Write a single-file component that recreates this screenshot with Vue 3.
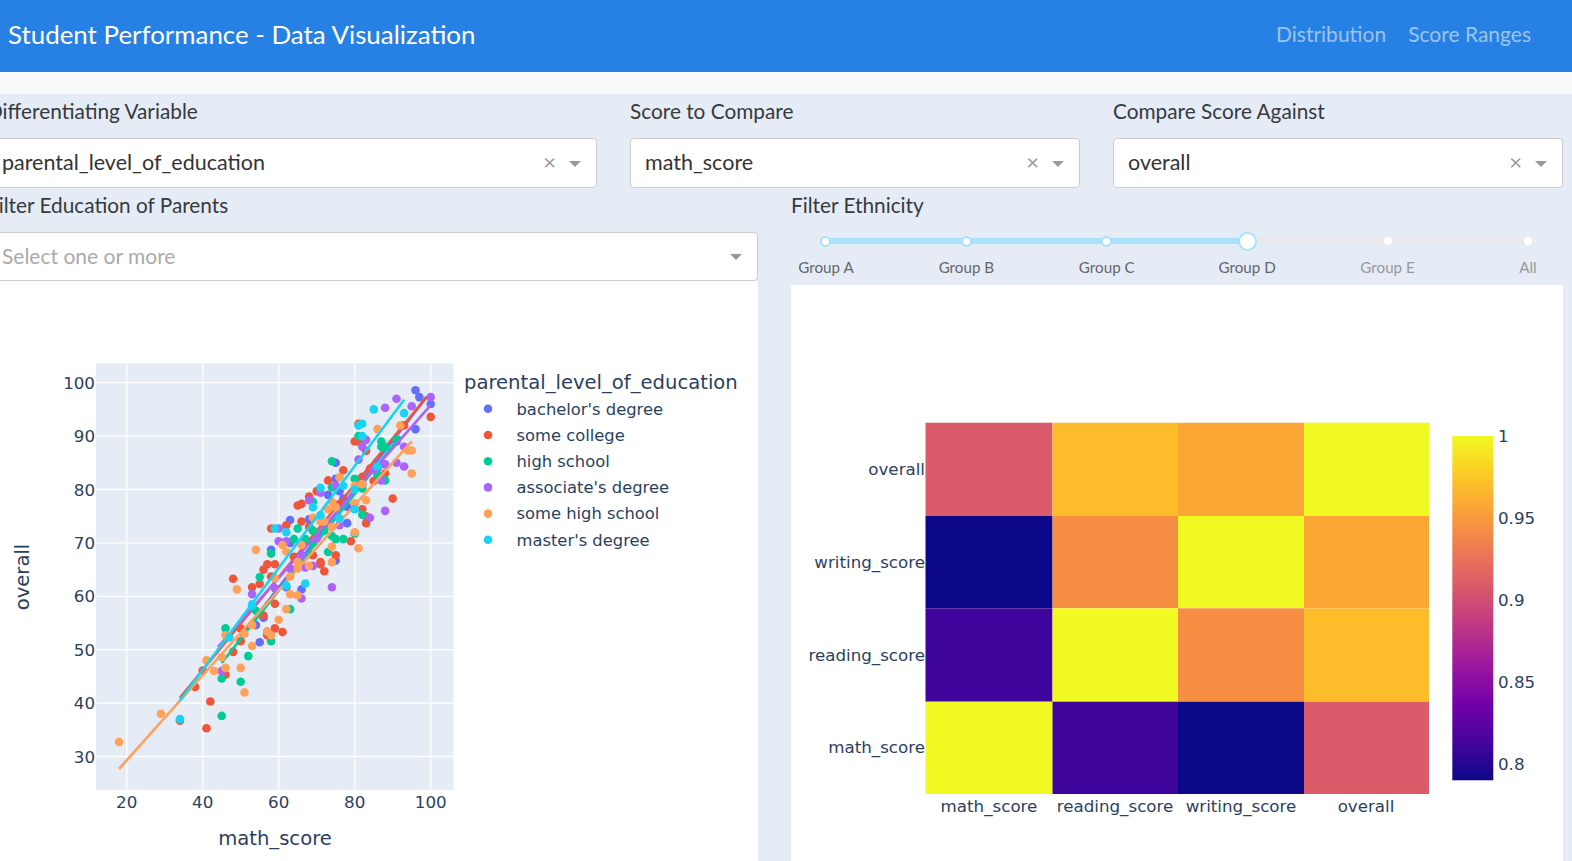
<script setup>
// Chart data read off the dashboard
const groups = [
  { name: "bachelor's degree", color: '#636efa', line: [[50, 52.5], [99, 97.4]], pts: [[96,98.6],[97,97.3],[100,96],[96,91.3],[75,85],[75,82],[76,79.7],[73,79],[77,78.3],[78,76.8],[78,73.7],[63,74.3],[68,74.4],[58,68.7],[75,66.7],[62,61.7],[66,61.3],[54,54.6],[56,56],[55,51.4],[63,70],[70,71],[82,81],[91,89],[86,84]] },
  { name: 'some college', color: '#ef553b', line: [[34, 41], [99, 97.4]], pts: [[100,93.6],[81,92.3],[80,89],[81,89],[83,87.2],[77,83.6],[73,81.7],[84,83.9],[82,82.4],[85,81.6],[88,83],[90,78.3],[68,78.7],[70,79.7],[65,77],[66,77.3],[66,74],[62,73.3],[58,72.7],[68,73],[76,77.3],[82,76.3],[83,75],[83,73.7],[79,70.3],[56,65],[57,66],[59,66],[58,63.7],[53,61.7],[55,62.3],[48,63.3],[71,66.4],[71,66],[72,64.7],[75,67.7],[69,67.7],[64,67.4],[59,58.6],[56,56.4],[59,54],[61,53.3],[57,52.7],[50,51.6],[48,49.6],[46,45.3],[40,46.1],[38,43],[42,40.3],[34,36.7],[41,35.3],[50,54],[93,92]] },
  { name: 'high school', color: '#00cc96', line: [[45, 47.5], [92, 90]], pts: [[74,85.3],[81,90],[87,89],[87,88],[88,88],[91,89.3],[80,82],[82,80.2],[74,80.4],[88,81.7],[86,82.7],[82,75.3],[65,72.7],[69,72.3],[69,77.7],[64,70.7],[67,70.7],[74,71.3],[75,70.7],[77,70.7],[80,71.7],[73,68.3],[58,68],[55,63.6],[69,70],[72,72.3],[63,57.6],[54,57.3],[46,54],[58,51.6],[52,48.8],[45,44.6],[50,44],[45,37.6]] },
  { name: "associate's degree", color: '#ab63fa', line: [[44, 50.5], [100, 95.8]], pts: [[100,97.3],[91,97],[88,95.3],[95,95.6],[83,89.3],[82,88],[81,85.6],[93,88],[88,84.7],[91,85],[93,84.3],[87,81.7],[85,83.7],[71,79.4],[75,80.7],[68,78],[88,76],[84,74.7],[76,73.3],[60,72.7],[60,70.3],[62,70.3],[53,60.4],[67,65.4],[69,65.7],[66,67.7],[74,61.7],[66,59.6],[70,70.8],[63,65.2],[59,61.5],[57,53.4],[45,46]] },
  { name: 'some high school', color: '#ffa15a', line: [[18, 27.7], [95, 89]], pts: [[86,91.3],[92,92],[94,87.3],[95,87.3],[95,83],[76,82.3],[82,81],[80,80.7],[83,78],[80,77.4],[73,76.3],[75,76.7],[74,77.7],[69,74.7],[71,74],[72,74],[74,73],[80,72],[81,69],[74,69.3],[74,66.4],[61,69.6],[54,68.7],[62,68.4],[66,69.6],[65,66.4],[65,65.2],[68,65.7],[63,63.7],[59,63.4],[49,61.3],[63,60.4],[65,60.2],[62,57.6],[60,55.6],[53,54.6],[51,53],[46,52.7],[57,53.4],[58,52.7],[53,50.7],[45,48.6],[41,48],[43,46],[46,46.6],[50,46.6],[51,42],[29,38],[18,32.7]] },
  { name: "master's degree", color: '#19d3f3', line: [[34, 40.5], [93, 96.8]], pts: [[85,95],[93,94.3],[81,92],[82,92.3],[82,90],[86,84.3],[77,80.7],[71,80.3],[80,80],[69,76.7],[71,75.2],[76,74.6],[80,76.3],[59,72.7],[62,72],[62,62],[67,62.4],[53,58.2],[53,58.5],[47,52.3],[34,37]] }
]

const sx = (v) => 126.7 + (v - 20) * 3.8
const sy = (v) => 382.7 + (100 - v) * 5.34

const xTicks = [20, 40, 60, 80, 100]
const yTicks = [100, 90, 80, 70, 60, 50, 40, 30]

const heatCols = [
  { name: 'math_score', x: 925.5, w: 127, mid: 989 },
  { name: 'reading_score', x: 1052.5, w: 125.5, mid: 1115 },
  { name: 'writing_score', x: 1178, w: 126, mid: 1241 },
  { name: 'overall', x: 1304, w: 125, mid: 1366 }
]
const heatRows = [
  { name: 'overall', y: 422.7, h: 93.3, cells: ['#dc5b6b', '#fdbd2a', '#fca636', '#f0f921'] },
  { name: 'writing_score', y: 516, h: 92.3, cells: ['#0d0887', '#f68f44', '#f0f921', '#fca636'] },
  { name: 'reading_score', y: 608.3, h: 93.4, cells: ['#3f049c', '#f0f921', '#f68f44', '#fdbd2a'] },
  { name: 'math_score', y: 701.7, h: 92.3, cells: ['#f0f921', '#3f049c', '#0d0887', '#dc5b6b'] }
]
const plasma = ['#0d0887', '#46039f', '#7201a8', '#9c179e', '#bd3786', '#d8576b', '#ed7953', '#fb9f3a', '#fdca26', '#f0f921']
const barTicks = [['1', 436], ['0.95', 518], ['0.9', 600], ['0.85', 682], ['0.8', 764]]

const marks = ['Group A', 'Group B', 'Group C', 'Group D', 'Group E', 'All']
const activeMark = 3

const topFilters = [
  { label: 'Differentiating Variable', value: 'parental_level_of_education' },
  { label: 'Score to Compare', value: 'math_score' },
  { label: 'Compare Score Against', value: 'overall' }
]
</script>

<template>
  <div class="page">
    <header class="navbar">
      <span class="brand">Student Performance - Data Visualization</span>
      <nav class="links">
        <a>Distribution</a>
        <a>Score Ranges</a>
      </nav>
    </header>
    <div class="strip"></div>

    <main class="content">
      <section class="row-top">
        <div v-for="f in topFilters" :key="f.label" class="field">
          <label class="field-label">{{ f.label }}</label>
          <div class="select">
            <span class="select-value">{{ f.value }}</span>
            <span class="select-clear">×</span>
            <span class="select-arrow"></span>
          </div>
        </div>
      </section>

      <section class="row-bottom">
        <div class="col">
          <label class="field-label">Filter Education of Parents</label>
          <div class="select select-short">
            <span class="select-value placeholder">Select one or more</span>
            <span class="select-arrow"></span>
          </div>
          <div class="panel panel-left">
            <svg class="chart" width="758" height="580" viewBox="0 281 758 580">
              <rect x="96" y="363.3" width="357.3" height="426.7" fill="#e5ecf6" />
              <g stroke="#fff" stroke-width="1.3">
                <line v-for="t in xTicks" :key="t" :x1="sx(t)" :x2="sx(t)" y1="363.3" y2="790" />
                <line v-for="t in yTicks" :key="t" x1="96" x2="453.3" :y1="sy(t)" :y2="sy(t)" />
              </g>
              <g v-for="g in groups" :key="g.name">
                <circle v-for="(p, i) in g.pts" :key="i" :cx="sx(p[0])" :cy="sy(p[1])" r="4.3" :fill="g.color" />
                <line :x1="sx(g.line[0][0])" :y1="sy(g.line[0][1])" :x2="sx(g.line[1][0])" :y2="sy(g.line[1][1])" :stroke="g.color" stroke-width="2.6" />
              </g>
              <g class="tick">
                <text v-for="t in xTicks" :key="t" :x="sx(t)" y="808" text-anchor="middle">{{ t }}</text>
                <text v-for="t in yTicks" :key="t" x="95" :y="sy(t) + 6" text-anchor="end">{{ t }}</text>
              </g>
              <text class="axis-title" x="275" y="845" text-anchor="middle">math_score</text>
              <text class="axis-title" transform="translate(29 577) rotate(-90)" text-anchor="middle">overall</text>
              <text class="axis-title" x="464" y="389">parental_level_of_education</text>
              <g v-for="(g, i) in groups" :key="g.name">
                <circle cx="488" :cy="408.8 + i * 26.2" r="4.3" :fill="g.color" />
                <text class="legend-item" x="516.5" :y="415 + i * 26.1">{{ g.name }}</text>
              </g>
            </svg>
          </div>
        </div>

        <div class="col">
          <label class="field-label">Filter Ethnicity</label>
          <div class="slider">
            <div class="track">
              <div class="track-fill"></div>
              <span
                v-for="(m, i) in marks"
                :key="m"
                class="dot"
                :class="{ on: i < activeMark, handle: i === activeMark }"
              ></span>
            </div>
            <div class="marks">
              <span v-for="(m, i) in marks" :key="m" class="mark" :class="{ on: i <= activeMark }">{{ m }}</span>
            </div>
          </div>
          <div class="panel panel-right">
            <svg class="chart" width="772" height="576" viewBox="791 285 772 576">
              <defs>
                <linearGradient id="plasma" x1="0" y1="1" x2="0" y2="0">
                  <stop v-for="(c, i) in plasma" :key="c" :offset="i / 9" :stop-color="c" />
                </linearGradient>
              </defs>
              <g v-for="r in heatRows" :key="r.name">
                <rect v-for="(c, i) in heatCols" :key="c.name" :x="c.x" :y="r.y" :width="c.w" :height="r.h" :fill="r.cells[i]" />
                <text class="tick" x="925" :y="r.y + r.h / 2 + 5.5" text-anchor="end">{{ r.name }}</text>
              </g>
              <text v-for="c in heatCols" :key="c.name" class="tick" :x="c.mid" y="812" text-anchor="middle">{{ c.name }}</text>
              <rect x="1452.3" y="436" width="41" height="344.3" fill="url(#plasma)" />
              <text v-for="t in barTicks" :key="t[0]" class="tick" x="1498" :y="t[1] + 6">{{ t[0] }}</text>
            </svg>
          </div>
        </div>
      </section>
    </main>
  </div>
</template>

<style>
html, body {
  margin: 0;
  overflow: hidden;
}
</style>

<style scoped>
.page {
  width: 1572px;
  height: 861px;
  overflow: hidden;
  display: flex;
  flex-direction: column;
  background: #e5ecf6;
  font-family: "Lato", "Liberation Sans", sans-serif;
  color: #373a3c;
}

.navbar {
  height: 72px;
  box-sizing: border-box;
  flex: none;
  display: flex;
  align-items: center;
  justify-content: space-between;
  padding: 0 41px 5px 8px;
  background: #2780e3;
}

.brand {
  font-size: 25.9px;
  color: #fff;
}

.links {
  display: flex;
  gap: 22px;
  font-size: 21px;
  color: rgba(255, 255, 255, 0.55);
}

.strip {
  height: 22px;
  flex: none;
  background: #f8f9fa;
}

.content {
  margin-left: -13px;
}

.row-top {
  display: grid;
  grid-template-columns: 610px 450px 450px;
  column-gap: 33px;
}

.row-bottom {
  display: grid;
  grid-template-columns: 771px 772px;
  column-gap: 33px;
}

.field-label {
  display: block;
  height: 34px;
  margin-bottom: 10px;
  line-height: 33px;
  font-size: 20.8px;
  color: #373a3c;
}

.select {
  height: 50px;
  box-sizing: border-box;
  display: flex;
  align-items: center;
  padding: 0 15px 0 14px;
  background: #fff;
  border: 1px solid #ccc;
  border-radius: 4px;
  font-size: 21.5px;
  line-height: 44px;
  color: #333;
}

.select-short {
  height: 49px;
}

.select-value {
  margin-right: auto;
  margin-bottom: 2px;
}

.placeholder {
  color: #aaa;
  font-size: 21px;
}

.select-clear {
  margin-right: 13px;
  margin-bottom: 3px;
  font-size: 22px;
  color: #999;
  line-height: 1;
}

.select-arrow {
  width: 0;
  height: 0;
  margin-top: 1px;
  border-style: solid;
  border-width: 6px 6px 0;
  border-color: #999 transparent transparent;
}

.slider {
  height: 53px;
  box-sizing: border-box;
  padding-top: 6px;
}

.track {
  position: relative;
  display: flex;
  align-items: center;
  justify-content: space-between;
  height: 6px;
  margin: 0 34.5px;
  background: #e9e9e9;
  border-radius: 3px;
}

.track-fill {
  position: absolute;
  left: 0;
  top: 0;
  bottom: 0;
  width: 60%;
  background: #abe2fb;
  border-radius: 3px;
}

.dot {
  position: relative;
  width: 8px;
  height: 8px;
  border-radius: 50%;
  background: #fff;
  margin: 0 -4px;
}

.dot.on {
  width: 11px;
  height: 11px;
  box-sizing: border-box;
  margin: 0 -5.5px;
  border: 2px solid #abe2fb;
}

.dot.handle {
  width: 19px;
  height: 19px;
  box-sizing: border-box;
  margin: 0 -9.5px;
  border: 2px solid #abe2fb;
}

.marks {
  display: flex;
  justify-content: space-between;
  margin: 13px -5px 0;
}

.mark {
  width: 80px;
  text-align: center;
  font-size: 15.2px;
  line-height: 20px;
  color: #999;
}

.mark.on {
  color: #666;
}

.panel {
  background: #fff;
}

.panel-left {
  height: 580px;
  padding-left: 13px;
}

.panel-right {
  height: 576px;
}

.chart {
  display: block;
}

.tick,
.tick text {
  font-family: "DejaVu Sans", "Liberation Sans", sans-serif;
  font-size: 16.7px;
  fill: #2a3f5f;
}

.legend-item {
  font-family: "DejaVu Sans", "Liberation Sans", sans-serif;
  font-size: 16.35px;
  fill: #2a3f5f;
}

.axis-title {
  font-family: "DejaVu Sans", "Liberation Sans", sans-serif;
  font-size: 19.6px;
  fill: #2a3f5f;
}
</style>
